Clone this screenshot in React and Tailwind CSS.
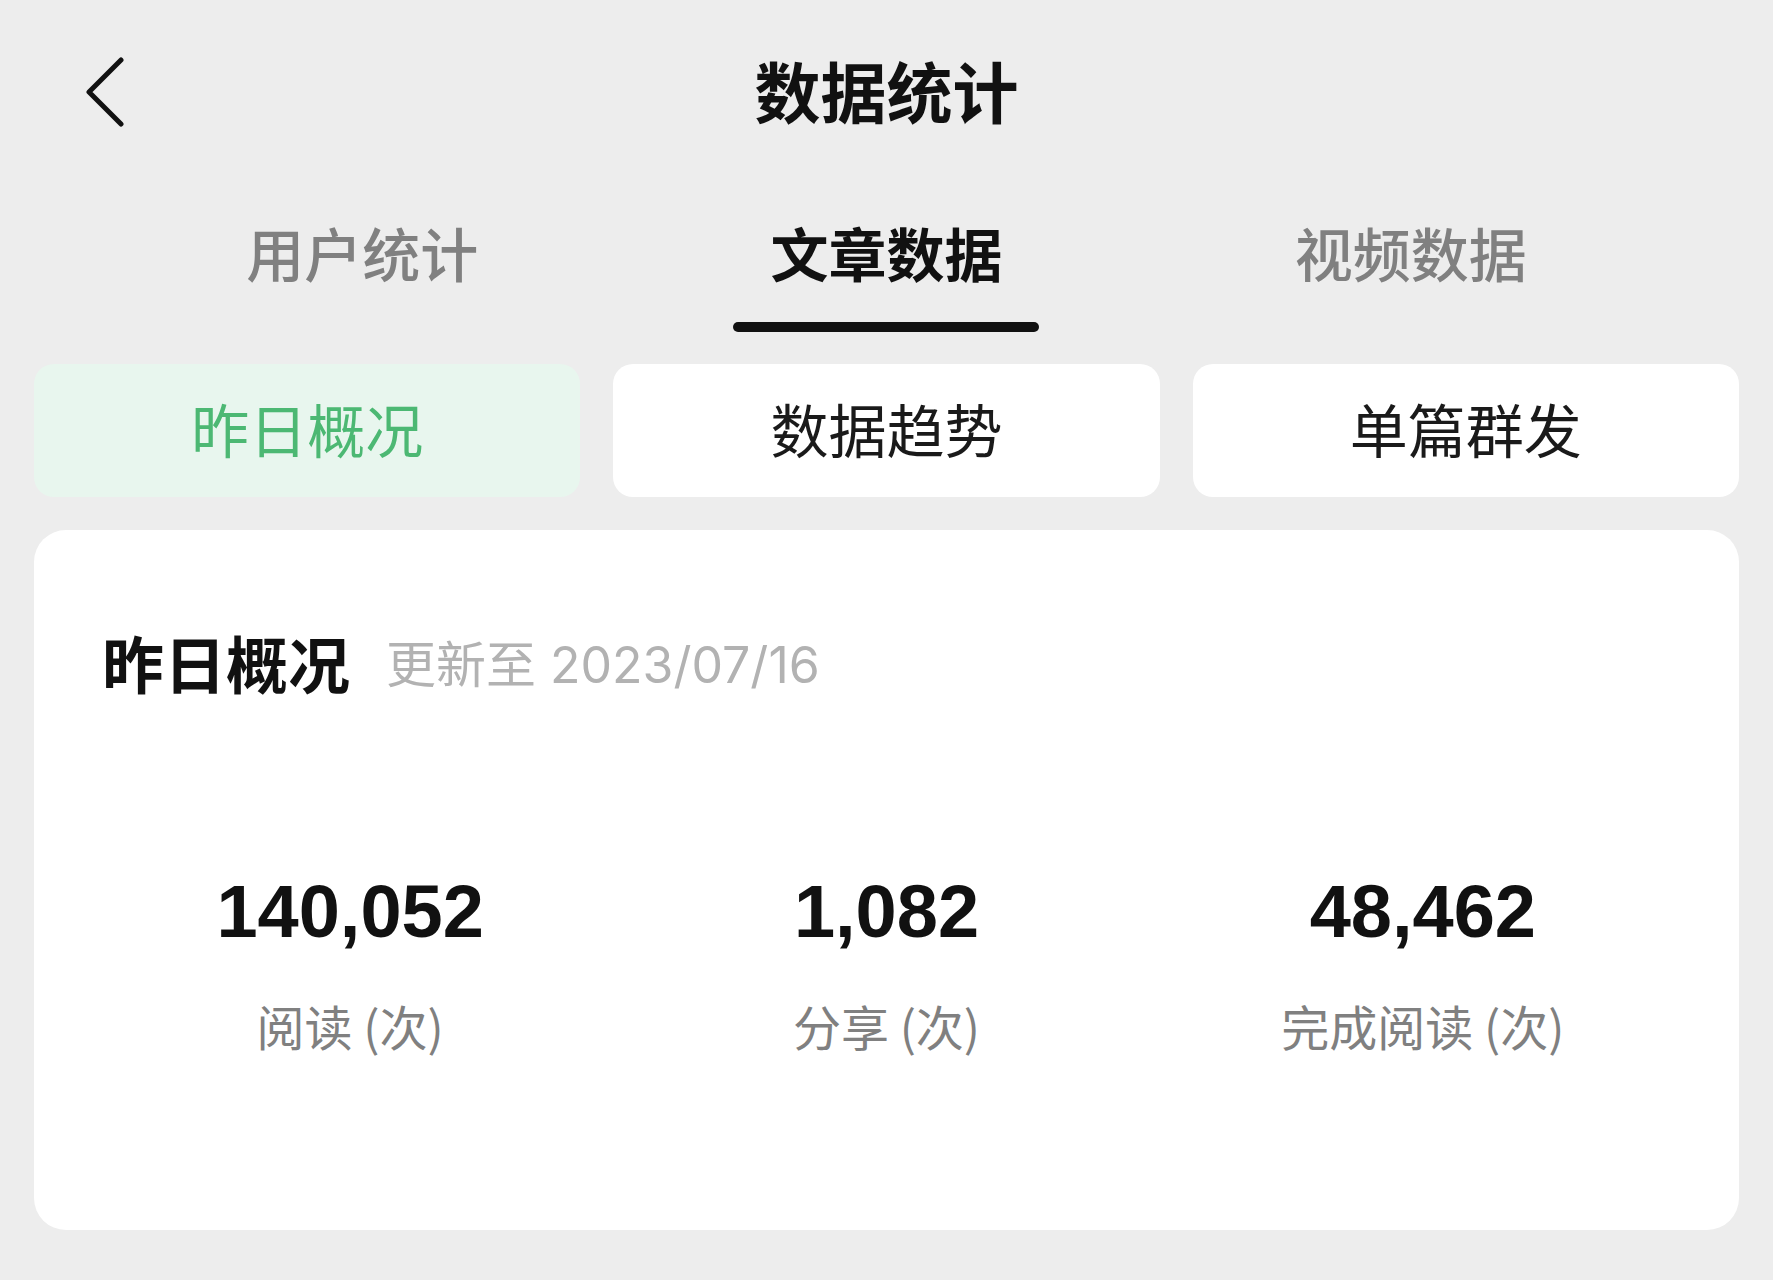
import React, { useState } from 'react';

const cjk = { fontFamily: '"Noto Sans CJK SC", "Noto Sans", sans-serif' };

const mainTabs = ['用户统计', '文章数据', '视频数据'];
const subTabs = ['昨日概况', '数据趋势', '单篇群发'];
const stats = [
  { value: '140,052', label: '阅读 (次)' },
  { value: '1,082', label: '分享 (次)' },
  { value: '48,462', label: '完成阅读 (次)' },
];

const BackIcon = () => (
  <svg width="40" height="70" viewBox="0 0 40 70" fill="none">
    <path
      d="M36 3 L4 35 L36 67"
      stroke="#111111"
      strokeWidth="5"
      strokeLinecap="round"
      strokeLinejoin="round"
    />
  </svg>
);

const App = () => {
  const [activeTab, setActiveTab] = useState(1);
  const [activeSub, setActiveSub] = useState(0);

  return (
    <div className="min-h-screen w-full bg-[#ededed]" style={cjk}>
      {/* header */}
      <div className="grid h-[184px] grid-cols-[1fr_auto_1fr] items-center px-[85px]">
        <button type="button" className="flex items-center justify-start">
          <BackIcon />
        </button>
        <h1 className="pb-[6px] text-[66px] font-bold leading-none text-[#111111]">数据统计</h1>
        <div />
      </div>

      {/* main tabs */}
      <div className="grid grid-cols-3 px-[100px] pt-[33px]">
        {mainTabs.map((tab, index) => (
          <button
            key={tab}
            type="button"
            onClick={() => setActiveTab(index)}
            className="flex flex-col items-center"
          >
            <span
              className={`text-[58px] leading-[70px] ${
                index === activeTab ? 'font-bold text-[#111111]' : 'font-medium text-[#808080]'
              }`}
            >
              {tab}
            </span>
            <span
              className={`mt-[35px] h-[10px] w-[306px] rounded-full ${
                index === activeTab ? 'bg-[#111111]' : 'bg-transparent'
              }`}
            />
          </button>
        ))}
      </div>

      {/* sub tabs */}
      <div className="mt-[32px] grid grid-cols-3 gap-[33px] px-[34px]">
        {subTabs.map((tab, index) => (
          <button
            key={tab}
            type="button"
            onClick={() => setActiveSub(index)}
            className={`flex h-[133px] items-center justify-center rounded-[20px] pb-[4px] text-[58px] ${
              index === activeSub ? 'bg-[#e8f6ee] text-[#4cb873]' : 'bg-white text-[#1a1a1a]'
            }`}
          >
            {tab}
          </button>
        ))}
      </div>

      {/* overview card */}
      <div className="mx-[34px] mt-[33px] h-[700px] rounded-[32px] bg-white">
        <div className="flex items-end gap-[36px] px-[68px] pt-[95px]">
          <h2 className="text-[62px] font-bold leading-[74px] text-[#111111]">昨日概况</h2>
          <span
            className="pb-[3px] text-[50px] leading-[62px] text-[#b2b2b2]"
            style={{ fontFamily: 'Inter, "Noto Sans CJK SC", sans-serif' }}
          >
            更新至 2023/07/16
          </span>
        </div>

        <div className="mt-[176px] grid grid-cols-3 px-[48px]">
          {stats.map((item) => (
            <div key={item.label} className="flex flex-col items-center">
              <span
                className="text-[74px] font-bold leading-none text-[#111111]"
                style={{ fontFamily: '"Liberation Sans", Arial, sans-serif' }}
              >
                {item.value}
              </span>
              <span className="mt-[47px] text-[48px] leading-[58px] text-[#808080]">{item.label}</span>
            </div>
          ))}
        </div>
      </div>
    </div>
  );
};

export default App;
